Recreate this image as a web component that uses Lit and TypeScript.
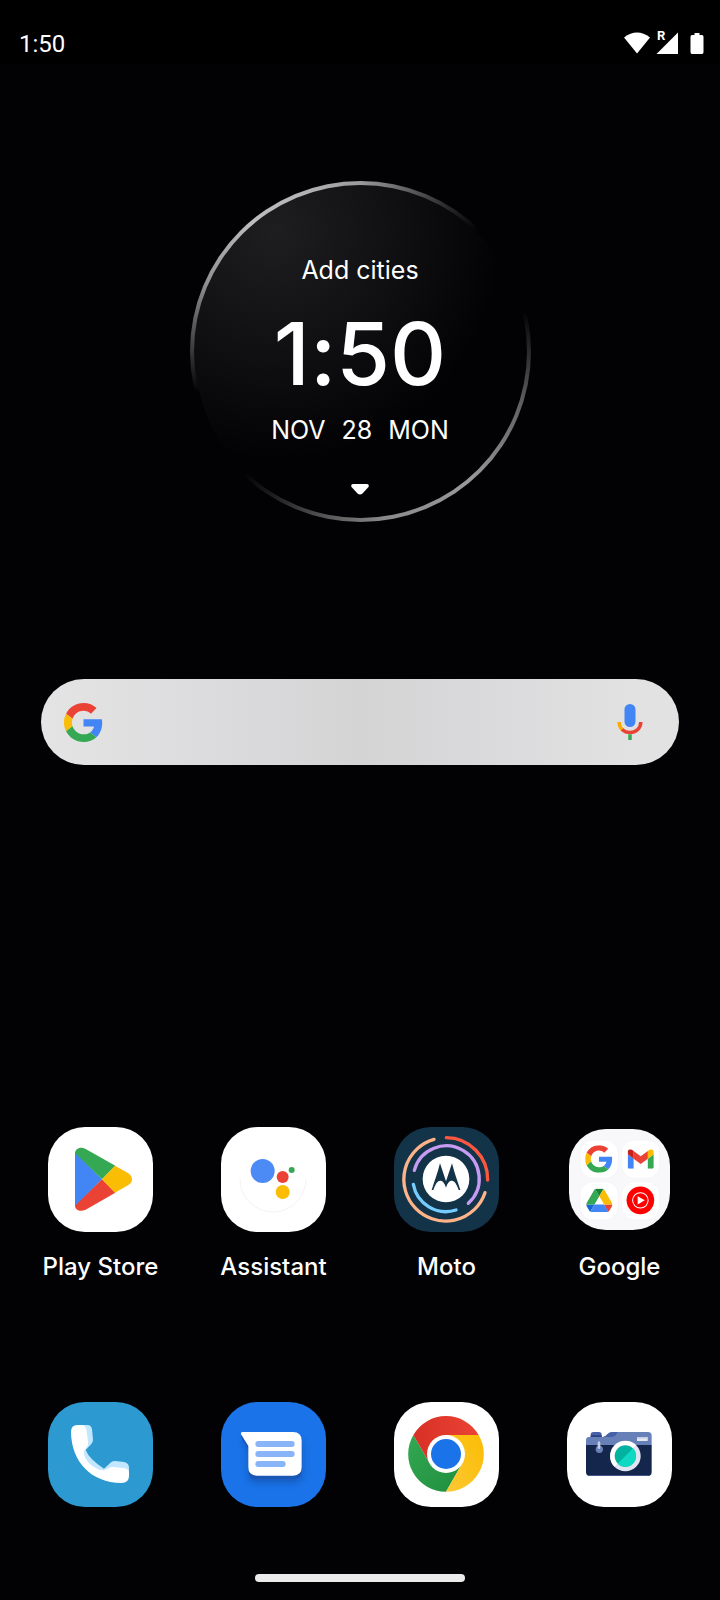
import { LitElement, html, css, svg, type SVGTemplateResult } from "lit";
import { customElement, property } from "lit/decorators.js";

const googleMark = svg`
  <path fill="#EA4335" d="M24 9.5c3.54 0 6.71 1.22 9.21 3.6l6.85-6.85C35.9 2.38 30.47 0 24 0 14.62 0 6.51 5.38 2.56 13.22l7.98 6.19C12.43 13.72 17.74 9.5 24 9.5z"/>
  <path fill="#4285F4" d="M46.98 24.55c0-1.57-.15-3.09-.38-4.55H24v9.02h12.94c-.58 2.96-2.26 5.48-4.78 7.18l7.73 6c4.51-4.18 7.09-10.36 7.09-17.65z"/>
  <path fill="#FBBC05" d="M10.53 28.59c-.48-1.45-.76-2.99-.76-4.59s.27-3.14.76-4.59l-7.98-6.19C.92 16.46 0 20.12 0 24c0 3.88.92 7.54 2.56 10.78l7.97-6.19z"/>
  <path fill="#34A853" d="M24 48c6.48 0 11.93-2.13 15.89-5.81l-7.73-6c-2.15 1.45-4.92 2.3-8.16 2.3-6.26 0-11.57-4.22-13.47-9.91l-7.98 6.19C6.51 42.62 14.62 48 24 48z"/>`;

const playStore = svg`
  <path fill="#4285F4" d="M81 76 162 157 81 239z"/>
  <path fill="#34A853" d="M81 78C82 66 96 57 113 66L202 116 162 157z"/>
  <path fill="#EA4335" d="M81 236C82 249 96 256 113 248L202 197 162 157z"/>
  <path fill="#FBBC04" d="M201 116 240 138Q252 146 252 157T240 175L201 197 162 157z"/>`;

const assistant = svg`
  <path fill="none" stroke="#ececec" stroke-width="2" d="M57 156A99 99 0 0 0 255 156"/>
  <circle cx="125" cy="132" r="36" fill="#4C8BF5"/>
  <circle cx="185" cy="150" r="18" fill="#EA4335"/>
  <circle cx="212" cy="129" r="9" fill="#34A853"/>
  <circle cx="185" cy="195" r="21" fill="#FBBC04"/>`;

const moto = svg`
  <g fill="none" stroke-width="10" stroke-linecap="round">
    <path stroke="#FFB389" d="M120 37A125 125 0 1 0 273 197"/>
    <path stroke="#FF5640" d="M157 32A125 125 0 0 1 281 159"/>
    <path stroke="#C79BF2" d="M61 130A99 99 0 1 1 223 229"/>
    <path stroke="#75CCFF" d="M58 172A99 99 0 0 0 186 249"/>
  </g>
  <circle cx="156" cy="156" r="70" fill="#fff"/>
  <path fill="#133448" d="M138 109 156 163 174 109C181 138 191 164 199 189L194 189C188 172 182 161 174 161 165 161 160 169 156 182 152 169 147 161 138 161 130 161 124 172 118 189L113 189C121 164 131 138 138 109z"/>`;

const googleFolder = svg`
  <g fill="#fff" stroke="#f3f3f6" stroke-width="2">
    <rect x="33" y="33" width="113" height="113" rx="38"/>
    <rect x="156" y="33" width="113" height="113" rx="38"/>
    <rect x="33" y="157" width="113" height="113" rx="38"/>
    <rect x="156" y="157" width="113" height="113" rx="38"/>
  </g>
  <svg x="48" y="48" width="82" height="82" viewBox="0 0 48 48">${googleMark}</svg>
  <svg x="174" y="60" width="78" height="58" viewBox="52 42 88 66">
    <path fill="#4285f4" d="M58 108h14V74L52 59v43c0 3.32 2.69 6 6 6"/>
    <path fill="#34a853" d="M120 108h14c3.32 0 6-2.69 6-6V59l-20 15"/>
    <path fill="#fbbc04" d="M120 48v26l20-15v-8c0-7.42-8.47-11.65-14.4-7.2"/>
    <path fill="#ea4335" d="M72 74V48l24 18 24-18v26L96 92"/>
    <path fill="#c5221f" d="M52 51v8l20 15V48l-5.6-4.2c-5.94-4.45-14.4-.22-14.4 7.2"/>
  </svg>
  <svg x="51" y="177" width="78" height="70" viewBox="0 0 87.3 78">
    <path fill="#1967d2" d="m6.6 66.85 3.85 6.65c.8 1.4 1.95 2.5 3.3 3.3l13.75-23.8h-27.5c0 1.55.4 3.1 1.2 4.5z"/>
    <path fill="#34a853" d="m43.65 25-13.75-23.8c-1.35.8-2.5 1.9-3.3 3.3l-25.4 44a9.06 9.06 0 0 0-1.2 4.5h27.5z"/>
    <path fill="#ea4335" d="m73.55 76.8c1.35-.8 2.5-1.9 3.3-3.3l1.6-2.75 7.65-13.25c.8-1.4 1.2-2.95 1.2-4.5h-27.5l5.85 11.5z"/>
    <path fill="#188038" d="m43.65 25 13.75-23.8c-1.35-.8-2.9-1.2-4.5-1.2h-18.5c-1.6 0-3.15.45-4.5 1.2z"/>
    <path fill="#4285f4" d="m59.8 53h-32.3l-13.75 23.8c1.35.8 2.9 1.2 4.5 1.2h50.8c1.6 0 3.15-.45 4.5-1.2z"/>
    <path fill="#fbbc04" d="m73.4 26.5-12.7-22c-.8-1.4-1.95-2.5-3.3-3.3l-13.75 23.8 16.15 28h27.45c0-1.55-.4-3.1-1.2-4.5z"/>
  </svg>
  <circle cx="212" cy="212" r="41" fill="#f00"/>
  <circle cx="212" cy="212" r="23" fill="none" stroke="#fff" stroke-width="3"/>
  <path fill="#fff" d="M204 200 225 212 204 224z"/>`;

const phone = svg`
  <path fill="#C2E7FF" d="M94 69H118Q130 69 132 82L135 113Q135 120 130 126L113 144Q124 172 168 200L189 181Q194 177 202 177L228 180Q243 183 243 197V215L160 212Q100 180 90 110z"/>
  <path fill="#fff" d="M88 69Q69 69 69 90C70 180 130 242 220 243Q243 243 243 222V211Q243 200 227 198L196 195Q186 194 178 200L168 204Q150 208 124 184 108 166 108 154L108 148Q111 142 120 130 121 118 118 104L115 82Q113 69 97 69z"/>`;

const messages = svg`
  <defs>
    <filter id="soft" x="-20%" y="-20%" width="140%" height="160%"><feGaussianBlur stdDeviation="11"/></filter>
  </defs>
  <path fill="#134ea6" opacity=".7" filter="url(#soft)" transform="translate(0 20)" d="M66 90H216Q242 90 242 116V196Q242 221 216 221H108Q82 221 82 196V132z"/>
  <path fill="#1a56b4" transform="translate(0 10)" d="M66 90H216Q242 90 242 116V196Q242 221 216 221H108Q82 221 82 196V132L61 98Q57 90 66 90z"/>
  <path fill="#fff" d="M66 90H216Q242 90 242 116V196Q242 221 216 221H108Q82 221 82 196V132L61 98Q57 90 66 90z"/>
  <g fill="#8AB4F8">
    <rect x="103" y="117" width="118" height="18" rx="9"/>
    <rect x="103" y="147" width="118" height="18" rx="9"/>
    <rect x="103" y="177" width="91" height="18" rx="9"/>
  </g>`;

const chrome = svg`
  <defs>
    <linearGradient id="cr" x1="0" x2="1"><stop stop-color="#D93025"/><stop offset="1" stop-color="#EA4335"/></linearGradient>
    <linearGradient id="cg" x1="0" y1="0" x2="1" y2="1"><stop stop-color="#34A853"/><stop offset="1" stop-color="#1E8E3E"/></linearGradient>
    <linearGradient id="cy" x1="0" y1="1" x2="1" y2="0"><stop stop-color="#FCC934"/><stop offset="1" stop-color="#FBBC04"/></linearGradient>
  </defs>
  <path fill="url(#cg)" d="M58 99 107 184H205L156 269A113 113 0 0 1 58 99z"/>
  <path fill="url(#cy)" d="M254 99A113 113 0 0 1 156 269L205 184 156 99z"/>
  <path fill="url(#cr)" d="M58 99A113 113 0 0 1 254 99H156L107 184z"/>
  <circle cx="156" cy="156" r="57" fill="#fff"/>
  <circle cx="156" cy="156" r="45" fill="#1A73E8"/>`;

const camera = svg`
  <path fill="#4661A6" d="M71 106V98Q71 90 79 90H96Q104 90 104 98V106z"/>
  <path fill="#2A4183" d="M71 100H104V106H71z"/>
  <path fill="#6880B8" d="M57 130V114Q57 105 66 105H108Q116 103 122 96 127 90 138 90H243Q254 90 254 101V130z"/>
  <path fill="#4661A6" d="M108 105Q116 103 122 96 127 90 138 90H152L146 100Q142 105 134 105z"/>
  <path fill="#14264C" d="M57 129H254V210Q254 222 242 222H69Q57 222 57 210z"/>
  <path fill="#45568A" d="M63 219H248Q246 222 241 222H70Q65 222 63 219z"/>
  <rect x="210" y="105" width="32" height="12" fill="#E4E8F3"/>
  <rect x="210" y="105" width="32" height="5" fill="#C5CEE5"/>
  <circle cx="97" cy="142" r="11" fill="#6880B8"/>
  <path fill="#C5CEE5" d="M92 122Q96 114 100 122V139Q96 143 92 139z"/>
  <circle cx="175" cy="162" r="46" fill="#E1E5F1"/>
  <path fill="#fff" d="M142 194A46 46 0 0 1 207 129z"/>
  <circle cx="175" cy="162" r="32" fill="#02B2A0"/>
  <path fill="#11D8C2" d="M198 139A32 32 0 0 1 152 185z"/>`;

interface App {
  name: string;
  tone: string;
  art: SVGTemplateResult;
  box?: string;
}

const apps: App[] = [
  { name: "Play Store", tone: "white", art: playStore },
  { name: "Assistant", tone: "white", art: assistant },
  { name: "Moto", tone: "navy", art: moto },
  { name: "Google", tone: "folder", art: googleFolder, box: "0 0 300 300" },
];

const dock: App[] = [
  { name: "Phone", tone: "sky", art: phone },
  { name: "Messages", tone: "blue", art: messages },
  { name: "Chrome", tone: "white", art: chrome },
  { name: "Camera", tone: "white", art: camera },
];

@customElement("status-bar")
class StatusBar extends LitElement {
  static styles = css`
    :host {
      display: flex;
      justify-content: space-between;
      align-items: flex-end;
      box-sizing: border-box;
      height: 64px;
      padding: 0 16px 6px 19px;
      background: #000;
      color: #fff;
      font: 24px/28px Roboto, sans-serif;
    }
    .icons {
      display: block;
      width: 80px;
      height: 36px;
    }
    .roaming {
      font: 700 13px Roboto, sans-serif;
    }
  `;
  render() {
    return html`
      <time>1:50</time>
      <svg class="icons" viewBox="0 -8 80 36" fill="#fff" role="img" aria-label="Wi-Fi, roaming signal, battery full">
        <path d="M13 23.5 0 7.500Q13-2.500 26 7.500z"/>
        <path d="M54 2.500V24H32.500z"/>
        <text class="roaming" x="33" y="10">R</text>
        <path d="M70.500 3H75.500V5H78Q79.500 5 79.500 7V22Q79.500 24 78 24H68Q66.500 24 66.500 22V7Q66.500 5 68 5H70.500z"/>
      </svg>
    `;
  }
}

@customElement("clock-widget")
class ClockWidget extends LitElement {
  static styles = css`
    :host {
      display: block;
      color: #fff;
      font: 400 25px/32px Inter, sans-serif;
    }
    .ring {
      display: flex;
      flex-direction: column;
      align-items: center;
      box-sizing: border-box;
      width: 341px;
      height: 341px;
      margin: 0 auto;
      padding-top: 69px;
      border: 4px solid transparent;
      border-radius: 50%;
      background:
        radial-gradient(circle at 24% 14%, #1e1e20, #0f0f11 34%, #020204 60%) padding-box,
        conic-gradient(
          #9a9a9a 0deg, #686868 14deg, #2c2c2c 30deg, #020204 44deg,
          #020204 76deg, #242424 88deg, #606060 108deg, #999 140deg,
          #8a8a8a 172deg, #505050 194deg, #1c1c1c 212deg, #020204 224deg,
          #020204 256deg, #404040 272deg, #909090 294deg, #bdbdbd 320deg,
          #b4b4b4 340deg, #9a9a9a 360deg
        ) border-box;
    }
    button {
      padding: 0;
      border: 0;
      background: none;
      color: inherit;
      font: inherit;
    }
    .time {
      margin-top: 16px;
      font-size: 87px;
      line-height: 104px;
      font-weight: 500;
      font-feature-settings: "calt" 0;
    }
    .date {
      display: flex;
      gap: 16px;
      margin-top: 8px;
    }
    .more {
      margin-top: 37px;
    }
    .more svg {
      display: block;
      width: 18px;
      height: 12px;
    }
  `;
  render() {
    return html`
      <div class="ring">
        <button class="city">Add cities</button>
        <time class="time">1:50</time>
        <div class="date"><span>NOV</span><span>28</span><span>MON</span></div>
        <button class="more" aria-label="More">
          <svg viewBox="0 0 18 12" fill="#fff"><path d="M2 1H16Q18.500 1 17.500 4L11.500 10.500Q9 12.500 6.500 10.500L.5 4Q-.5 1 2 1z"/></svg>
        </button>
      </div>
    `;
  }
}

@customElement("search-bar")
class SearchBar extends LitElement {
  static styles = css`
    :host {
      display: block;
    }
    .bar {
      display: flex;
      align-items: center;
      box-sizing: border-box;
      height: 86px;
      padding: 0 36px 0 23px;
      border-radius: 43px;
      background: linear-gradient(90deg, #e4e4e4, #dcdcde 25%, #d4d4d5 50%, #dadadc 70%, #e2e2e2 94%);
    }
    .logo {
      width: 39px;
      height: 39px;
    }
    .field {
      flex: 1;
      min-width: 0;
      border: 0;
      outline: 0;
      background: none;
      font: 24px Inter, sans-serif;
    }
    .mic {
      padding: 0;
      border: 0;
      background: none;
    }
    .mic svg {
      display: block;
      width: 26px;
      height: 36px;
    }
  `;
  render() {
    return html`
      <form class="bar" role="search">
        <svg class="logo" viewBox="0 0 48 48" aria-hidden="true">${googleMark}</svg>
        <input class="field" type="text" aria-label="Search" />
        <button class="mic" type="button" aria-label="Voice search">
          <svg viewBox="0 0 26 36" fill="none">
            <rect x="7.500" y="0" width="11" height="23" rx="5.500" fill="#4285F4"/>
            <path stroke="#F9AB00" stroke-width="3.500" d="M2.200 18Q2.200 23 5.500 26"/>
            <path stroke="#EA4335" stroke-width="3.500" d="M5 25.500Q8.500 28.600 13 28.600C18.500 28.600 23.800 24.500 23.800 18"/>
            <path stroke="#34A853" stroke-width="3.500" d="M13 30.300V36"/>
          </svg>
        </button>
      </form>
    `;
  }
}

@customElement("app-grid")
class AppGrid extends LitElement {
  @property({ attribute: false }) apps: App[] = [];
  @property({ type: Boolean }) labelled = false;

  static styles = css`
    :host {
      display: grid;
      grid-template-columns: repeat(4, 1fr);
      padding: 0 14px;
    }
    .app {
      display: flex;
      flex-direction: column;
      align-items: center;
      gap: 19px;
      padding: 0;
      border: 0;
      background: none;
      color: #fff;
      font: 500 24px/32px Inter, sans-serif;
      white-space: nowrap;
    }
    .slot {
      display: grid;
      place-items: center;
      height: 105px;
    }
    .icon {
      display: block;
      width: 105px;
      height: 105px;
      border-radius: 37px;
    }
    .white { background: #fff; }
    .navy { background: #133448; }
    .sky { background: #2c9ad0; }
    .blue { background: #1a73e8; }
    .folder {
      width: 101px;
      height: 101px;
      background: #f8f8fb;
    }
  `;
  render() {
    return this.apps.map(
      (app) => html`
        <button class="app" aria-label=${app.name}>
          <span class="slot">
            <svg class="icon ${app.tone}" viewBox=${app.box ?? "0 0 315 315"} aria-hidden="true">${app.art}</svg>
          </span>
          ${this.labelled ? html`<span>${app.name}</span>` : null}
        </button>
      `
    );
  }
}

@customElement("app-root")
class AppRoot extends LitElement {
  static styles = css`
    :host {
      display: flex;
      flex-direction: column;
      box-sizing: border-box;
      min-height: 100vh;
      padding-bottom: 18px;
      background: #020204;
    }
    .clock {
      margin-top: 117px;
    }
    .search {
      margin: 157px 41px 64px;
    }
    .apps {
      margin-top: auto;
    }
    .dock {
      margin-top: 119px;
    }
    .home {
      width: 210px;
      height: 8px;
      margin: 67px auto 0;
      padding: 0;
      border: 0;
      border-radius: 4px;
      background: #ebebeb;
    }
  `;
  render() {
    return html`
      <status-bar></status-bar>
      <clock-widget class="clock"></clock-widget>
      <search-bar class="search"></search-bar>
      <app-grid class="apps" .apps=${apps} labelled></app-grid>
      <app-grid class="dock" .apps=${dock}></app-grid>
      <button class="home" aria-label="Home"></button>
    `;
  }
}
